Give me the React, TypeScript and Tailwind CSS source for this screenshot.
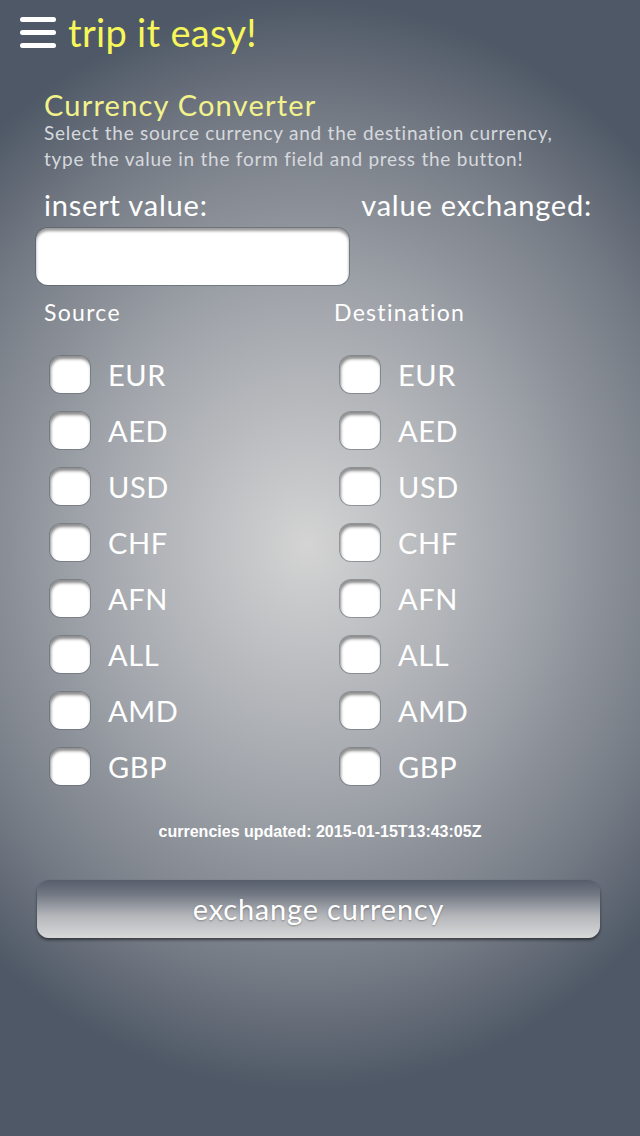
const currencies = ["EUR", "AED", "USD", "CHF", "AFN", "ALL", "AMD", "GBP"];

const CurrencyBox = ({ code }: { code: string }) => (
  <label className="flex items-center h-[56px]">
    <span className="w-[40px] h-[37px] rounded-[11px] bg-white shadow-[inset_1px_3px_3px_rgba(0,0,0,0.45),0_0_0_1px_rgba(90,95,105,0.5)]" />
    <span className="ml-[18px] text-[29px] text-white leading-none tracking-[0.6px]">{code}</span>
  </label>
);

const App = () => {
  return (
    <div className="min-h-[1136px] w-full bg-[radial-gradient(ellipse_75%_48%_at_48%_48%,#d4d4d4_0%,#a2a6ac_45%,#737983_80%,#4e5866_100%)] bg-[#4e5866] font-['Lato',sans-serif] text-white">
      {/* Header */}
      <div className="flex items-center h-[64px] pl-[20px]">
        <div className="flex flex-col gap-[8px] w-[36px]">
          <span className="h-[5px] rounded-full bg-white" />
          <span className="h-[5px] rounded-full bg-white" />
          <span className="h-[5px] rounded-full bg-white" />
        </div>
        <h1 className="ml-[12px] text-[38px] leading-none text-[#f7f75a] tracking-[0.3px]">trip it easy!</h1>
      </div>

      <div className="pl-[44px] pr-[30px] pt-[26px]">
        <h2 className="text-[29px] leading-[30px] text-[#f3f38c] tracking-[1.2px]">Currency Converter</h2>
        <p className="text-[19px] leading-[26px] text-[#d6d9de] tracking-[0.75px] whitespace-nowrap">
          Select the source currency and the destination currency,
          <br />
          type the value in the form field and press the button!
        </p>

        <div className="flex justify-between mt-[16px] pr-[18px] text-[29px] leading-[34px] tracking-[0.8px]">
          <span>insert value:</span>
          <span>value exchanged:</span>
        </div>
      </div>

      <div className="pl-[36px] mt-[6px]">
        <input
          type="text"
          className="w-[313px] h-[57px] rounded-[12px] bg-white outline-none shadow-[inset_0_3px_3px_rgba(0,0,0,0.4),0_0_0_1px_rgba(80,85,95,0.5)]"
        />
      </div>

      <div className="grid grid-cols-[290px_1fr] pl-[44px] mt-[12px] text-[23px] leading-[30px] tracking-[1.3px]">
        <div>Source</div>
        <div>Destination</div>
      </div>

      <div className="grid grid-cols-[290px_1fr] pl-[50px] mt-[19px]">
        <div className="flex flex-col">
          {currencies.map((c) => (
            <CurrencyBox key={"s" + c} code={c} />
          ))}
        </div>
        <div className="flex flex-col">
          {currencies.map((c) => (
            <CurrencyBox key={"d" + c} code={c} />
          ))}
        </div>
      </div>

      <p className="mt-[26px] text-center font-['Liberation_Sans',sans-serif] font-bold text-[16px] text-white">
        currencies updated: 2015-01-15T13:43:05Z
      </p>

      <div className="px-[37px] mt-[36px] pr-[40px]">
        <button className="w-full h-[58px] rounded-[12px] bg-[linear-gradient(to_bottom,#565e6c_0%,#737984_25%,#b4b6ba_62%,#d9d9d9_100%)] shadow-[0_2px_3px_rgba(0,0,0,0.5)] text-[29px] text-white tracking-[0.8px] [text-shadow:0_1px_2px_rgba(0,0,0,0.3)]">
          exchange currency
        </button>
      </div>
    </div>
  );
};

export default App;
